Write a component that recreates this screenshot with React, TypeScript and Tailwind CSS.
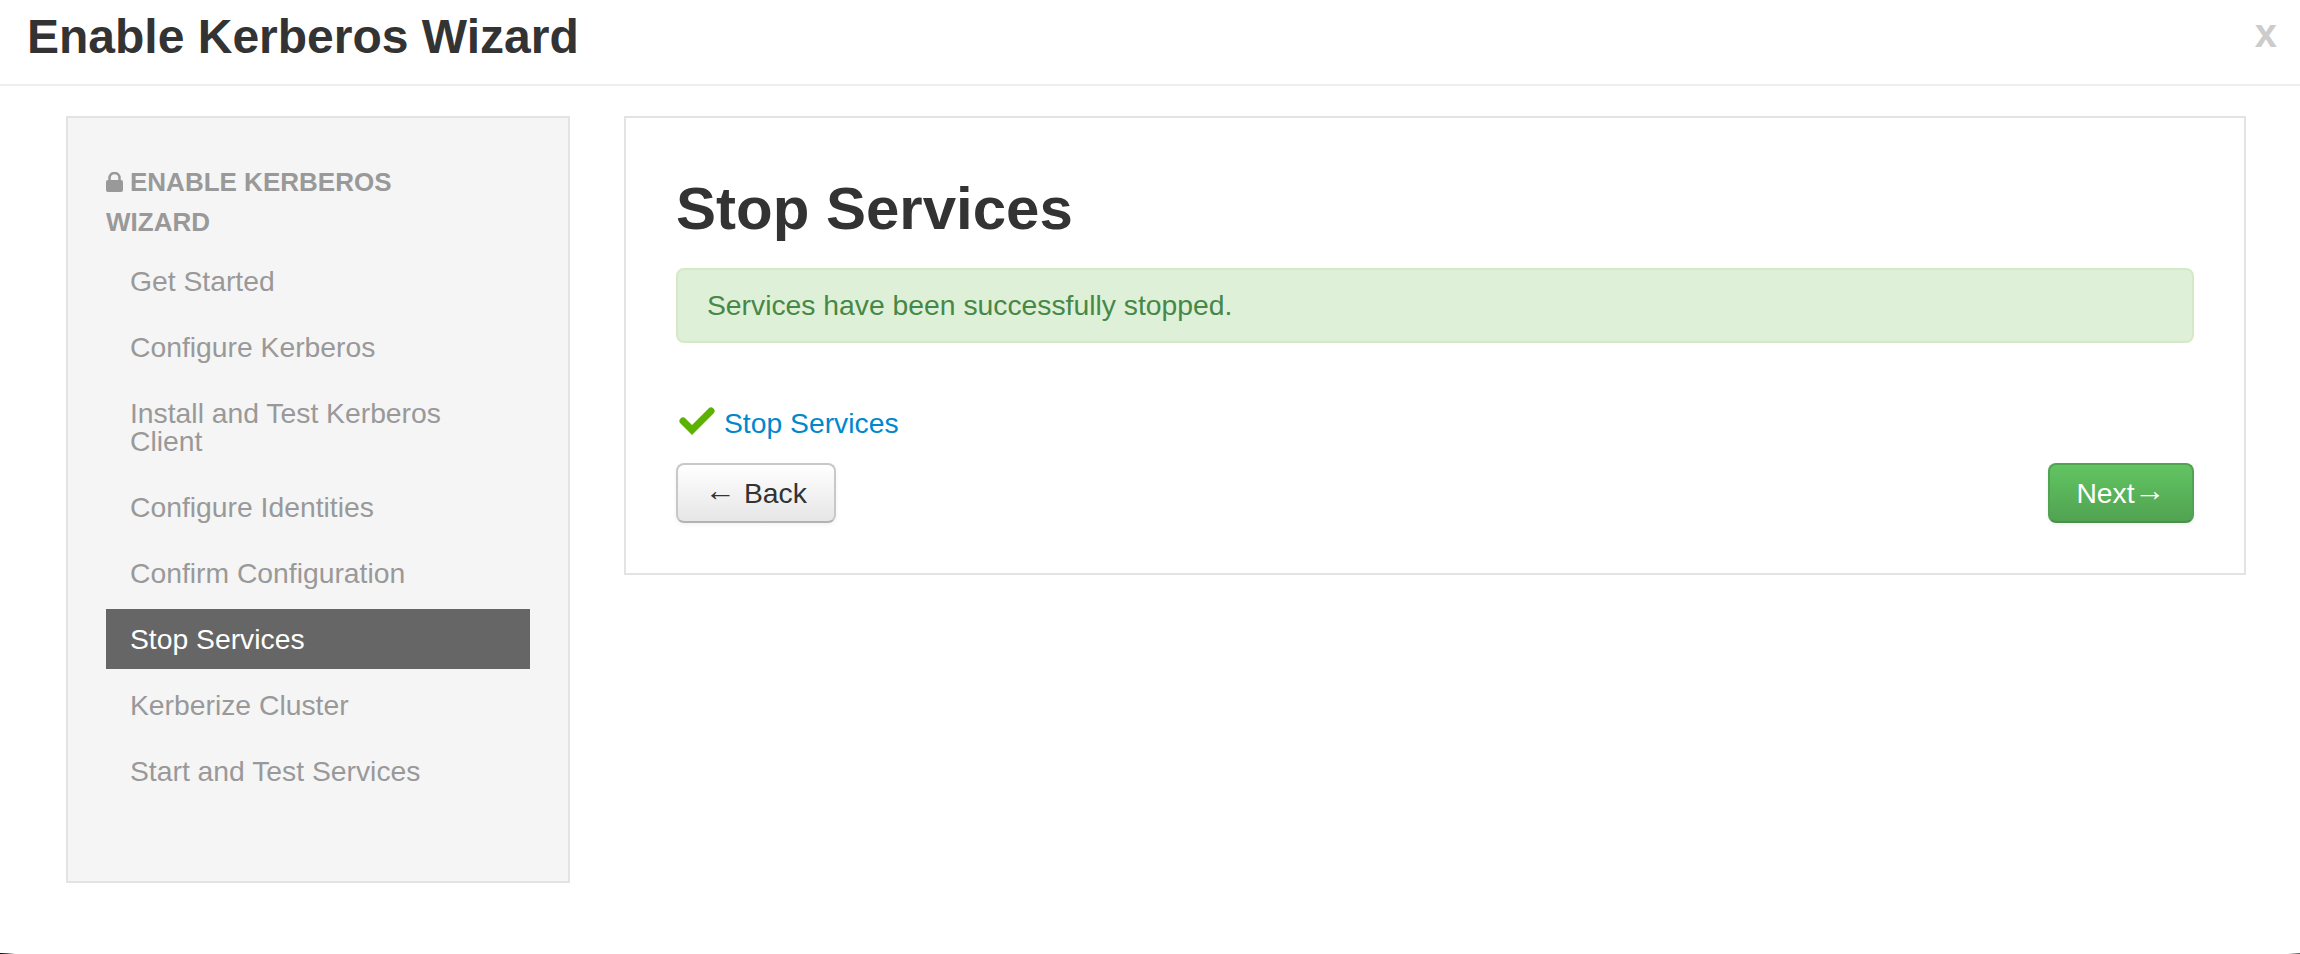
const steps = [
  'Get Started',
  'Configure Kerberos',
  'Install and Test Kerberos Client',
  'Configure Identities',
  'Confirm Configuration',
  'Stop Services',
  'Kerberize Cluster',
  'Start and Test Services',
]

export default function App() {
  return (
    <div className="relative h-[954px] overflow-hidden bg-white font-['Liberation_Sans',Arial,sans-serif] text-[28.3px] leading-[40px] text-[#333]">
      {/* Modal header */}
      <header className="flex h-[86px] justify-between border-b-2 border-[#eeeeee] pl-[27px] pr-[23px]">
        <h3 className="mt-[2px] text-[48px] font-bold leading-[70px]">Enable Kerberos Wizard</h3>
        <button className="mt-[13px] h-[40px] text-[40px] font-bold leading-[40px] text-[#cccccc]">x</button>
      </header>

      <div className="flex items-start gap-[54px] pl-[66px] pr-[54px] pt-[30px]">
        {/* Steps */}
        <aside className="h-[767px] w-[504px] shrink-0 border-2 border-[#e3e3e3] bg-[#f5f5f5] pl-[38px] pr-[38px] pt-[44px]">
          <div className="mb-[9px] pr-[100px] text-[26px] font-bold uppercase text-[#999999]">
            <svg className="mr-[7px] inline-block align-[-1px]" width="17" height="20" viewBox="0 0 17 20" fill="#999999">
              <rect x="0" y="8" width="17" height="12" rx="2" />
              <path d="M3.5 9V6a5 5 0 0 1 10 0v3" fill="none" stroke="#999999" strokeWidth="2.5" />
            </svg>
            Enable Kerberos Wizard
          </div>
          <ul className="flex flex-col gap-[6px]">
            {steps.map((step) => (
              <li
                key={step}
                className={
                  step === 'Stop Services'
                    ? 'bg-[#666666] px-[24px] py-[16px] leading-[28px] text-white'
                    : 'px-[24px] py-[16px] leading-[28px] text-[#999999]'
                }
              >
                {step}
              </li>
            ))}
          </ul>
        </aside>

        {/* Step content */}
        <main className="h-[459px] flex-1 border-2 border-[#e3e3e3] bg-white pl-[50px] pr-[50px]">
          <h2 className="mt-[51px] text-[60px] font-bold leading-[80px]">Stop Services</h2>
          <div className="mt-[19px] h-[75px] rounded-[8px] border-2 border-[#d6e9c6] bg-[#dff0d8] px-[29px] py-[15px] text-[#468847]">
            Services have been successfully stopped.
          </div>
          <div className="mt-[56px] flex h-[48px] items-center">
            <svg className="mb-[4px] ml-[3px]" width="36" height="28" viewBox="0 0 36 28" fill="none">
              <polyline points="4,14 13,23 32,4" stroke="#5bb200" strokeWidth="7" strokeLinecap="round" />
            </svg>
            <a className="ml-[9px] text-[#0088cc]">Stop Services</a>
          </div>
          <div className="mt-[16px] flex justify-between">
            <button className="h-[60px] w-[160px] rounded-[8px] border-2 border-[#c8c8c8] border-b-[#b3b3b3] bg-gradient-to-b from-white to-[#e6e6e6] text-[#333] shadow-[0_2px_4px_rgba(0,0,0,0.05)]">
              <span className="inline-block align-[2px] text-[31px] leading-none">←</span> Back
            </button>
            <button className="h-[60px] w-[146px] rounded-[8px] border-2 border-[#51a351] border-b-[#4a8f4a] bg-gradient-to-b from-[#62c462] to-[#51a351] text-white shadow-[0_2px_4px_rgba(0,0,0,0.05)]">
              Next<span className="inline-block align-[2px] text-[31px] leading-none">→</span>
            </button>
          </div>
        </main>
      </div>

      {/* Window corners showing through on the last pixel row */}
      <div className="absolute bottom-0 left-0 h-px w-[15px] bg-gradient-to-r from-black via-black/60 to-transparent" />
      <div className="absolute bottom-0 right-0 h-px w-[12px] bg-gradient-to-l from-[#555555] to-transparent" />
    </div>
  )
}
